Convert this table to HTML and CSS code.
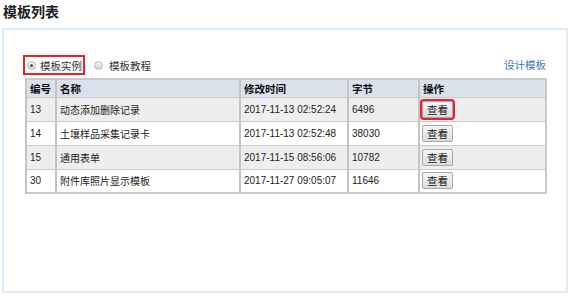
FILE: index.html
```html
<!DOCTYPE html>
<html lang="zh">
<head>
<meta charset="utf-8">
<link rel="stylesheet" href="styles.css">
</head>
<body>
<h1 class="title">模板列表</h1>
<div class="panel">
  <div class="toolbar">
    <div class="tabs">
      <label class="tab tab-active"><span class="radio radio-on"></span>模板实例</label>
      <label class="tab"><span class="radio"></span>模板教程</label>
    </div>
    <a class="design-link">设计模板</a>
  </div>
  <table class="grid">
    <thead>
      <tr><th class="c-id">编号</th><th class="c-name">名称</th><th class="c-time">修改时间</th><th class="c-size">字节</th><th class="c-op">操作</th></tr>
    </thead>
    <tbody>
      <tr class="odd"><td>13</td><td>动态添加删除记录</td><td>2017-11-13 02:52:24</td><td>6496</td><td><button class="btn btn-marked">查看</button></td></tr>
      <tr><td>14</td><td>土壤样品采集记录卡</td><td>2017-11-13 02:52:48</td><td>38030</td><td><button class="btn">查看</button></td></tr>
      <tr class="odd"><td>15</td><td>通用表单</td><td>2017-11-15 08:56:06</td><td>10782</td><td><button class="btn">查看</button></td></tr>
      <tr><td>30</td><td>附件库照片显示模板</td><td>2017-11-27 09:05:07</td><td>11646</td><td><button class="btn">查看</button></td></tr>
    </tbody>
  </table>
</div>
</body>
</html>
```
FILE: styles.css
```css
html, body {
  margin: 0;
  padding: 0;
  background: #fff;
}
body {
  font-family: "Liberation Sans", "Noto Sans CJK SC", sans-serif;
  font-size: 10px;
  color: #222;
}
.title {
  margin: 0;
  padding: 3px 0 0 3px;
  height: 25px;
  box-sizing: border-box;
  font-size: 14px;
  font-weight: bold;
  line-height: 18px;
  color: #222;
}
.panel {
  margin: 3px 0 0 2px;
  width: 566px;
  height: 265px;
  box-sizing: border-box;
  border: 2px solid #dcecf9;
  padding: 24px 20px 0 21px;
}
.toolbar {
  display: flex;
  align-items: center;
  justify-content: space-between;
  height: 22px;
  margin-bottom: 2px;
}
.tabs {
  display: flex;
  align-items: center;
}
.tab {
  display: flex;
  align-items: center;
  height: 16px;
  padding: 0 1px 0 2px;
  border: 2px solid transparent;
  color: #333;
  margin-right: 5px;
  font-size: 10.5px;
}
.tab-active {
  border-color: #e8242a;
  margin-left: -2px;
}
.radio {
  display: inline-block;
  width: 7px;
  height: 7px;
  border-radius: 50%;
  border: 1px solid #b8b8b8;
  background: linear-gradient(#f4f4f4, #d8d8d8);
  margin-right: 4px;
  position: relative;
}
.tab:not(.tab-active) .radio {
  margin-right: 6px;
}
.radio-on::after {
  content: "";
  position: absolute;
  left: 2px;
  top: 2px;
  width: 3px;
  height: 3px;
  border-radius: 50%;
  background: #555;
}
.design-link {
  color: #3b78b5;
  margin-top: -2px;
  font-size: 10.5px;
}
.grid {
  width: 522px;
  border-collapse: collapse;
  border: 2px solid #c9c9c9;
  table-layout: fixed;
}
.grid th, .grid td {
  box-sizing: border-box;
  border: 1px solid #cbcbcb;
  border-left: 2px solid #c4c4c4;
  text-align: left;
  padding: 0 0 0 3px;
  font-size: 10px;
  white-space: nowrap;
}
.grid th {
  background: #dbe1ea;
  font-weight: bold;
  font-size: 10.5px;
  height: 18px;
  color: #111;
}
.grid td {
  height: 24px;
  color: #222;
}
.grid tr.odd td {
  background: #eeeeee;
}
.c-id { width: 30px; }
.c-name { width: 184px; }
.c-time { width: 108px; }
.c-size { width: 71px; }
.btn {
  font-family: "Noto Sans CJK SC", sans-serif;
  font-size: 10.5px;
  height: 17px;
  width: 31px;
  padding: 0;
  margin-left: -1px;
  line-height: 15px;
  border: 1px solid #a9a9a9;
  border-radius: 2px;
  background: linear-gradient(#f6f6f6, #dcdcdc);
  color: #222;
  vertical-align: middle;
}
.btn-marked {
  outline: 2px solid #e8242a;
  outline-offset: 0;
}
```
